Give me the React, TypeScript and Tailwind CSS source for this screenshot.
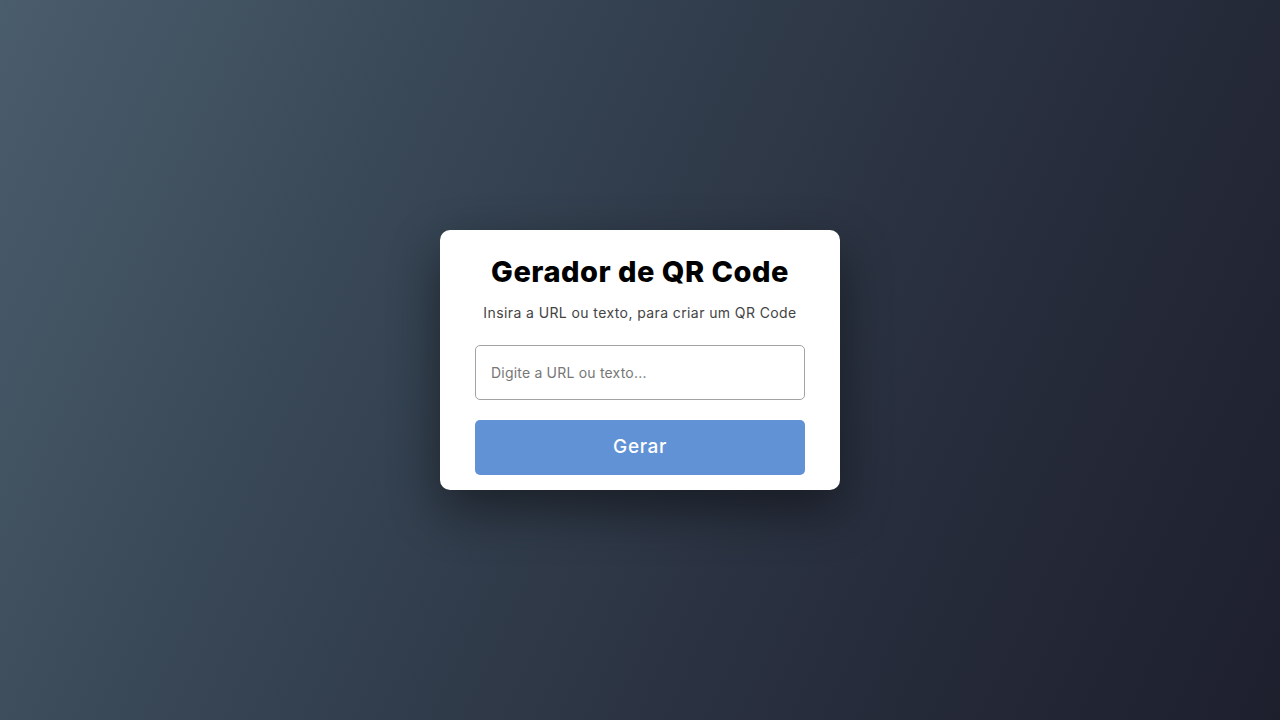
import React, { useState } from "react";

const App = () => {
  const [value, setValue] = useState("");

  return (
    <div
      className="w-full h-[720px] flex items-center justify-center bg-[linear-gradient(115deg,#4a5d6c_0%,#354352_35%,#272d3c_70%,#1d1f2d_100%)]"
      style={{ fontFamily: "Inter, 'Noto Sans', sans-serif" }}
    >
      <div className="w-[400px] bg-white rounded-[10px] px-[35px] pt-[22px] pb-[15px] flex flex-col items-center shadow-[0_20px_50px_rgba(0,0,0,0.45)]">
        <h1 className="text-[29px] leading-[40px] font-extrabold text-black tracking-[0.5px]">
          Gerador de QR Code
        </h1>
        <p className="mt-[11px] text-[14px] leading-[20px] text-[#444] tracking-[0.4px]">
          Insira a URL ou texto, para criar um QR Code
        </p>
        <input
          value={value}
          onChange={(e) => setValue(e.target.value)}
          placeholder="Digite a URL ou texto..."
          className="mt-[22px] w-full h-[55px] border border-[#a3a3a3] rounded-[5px] px-[15px] text-[14px] tracking-[0.2px] text-[#333] placeholder:text-[#777] outline-none"
        />
        <button className="mt-[20px] w-full h-[55px] rounded-[5px] bg-[#6292d6] text-white text-[19px] font-medium tracking-[0.6px]">
          Gerar
        </button>
      </div>
    </div>
  );
};

export default App;
